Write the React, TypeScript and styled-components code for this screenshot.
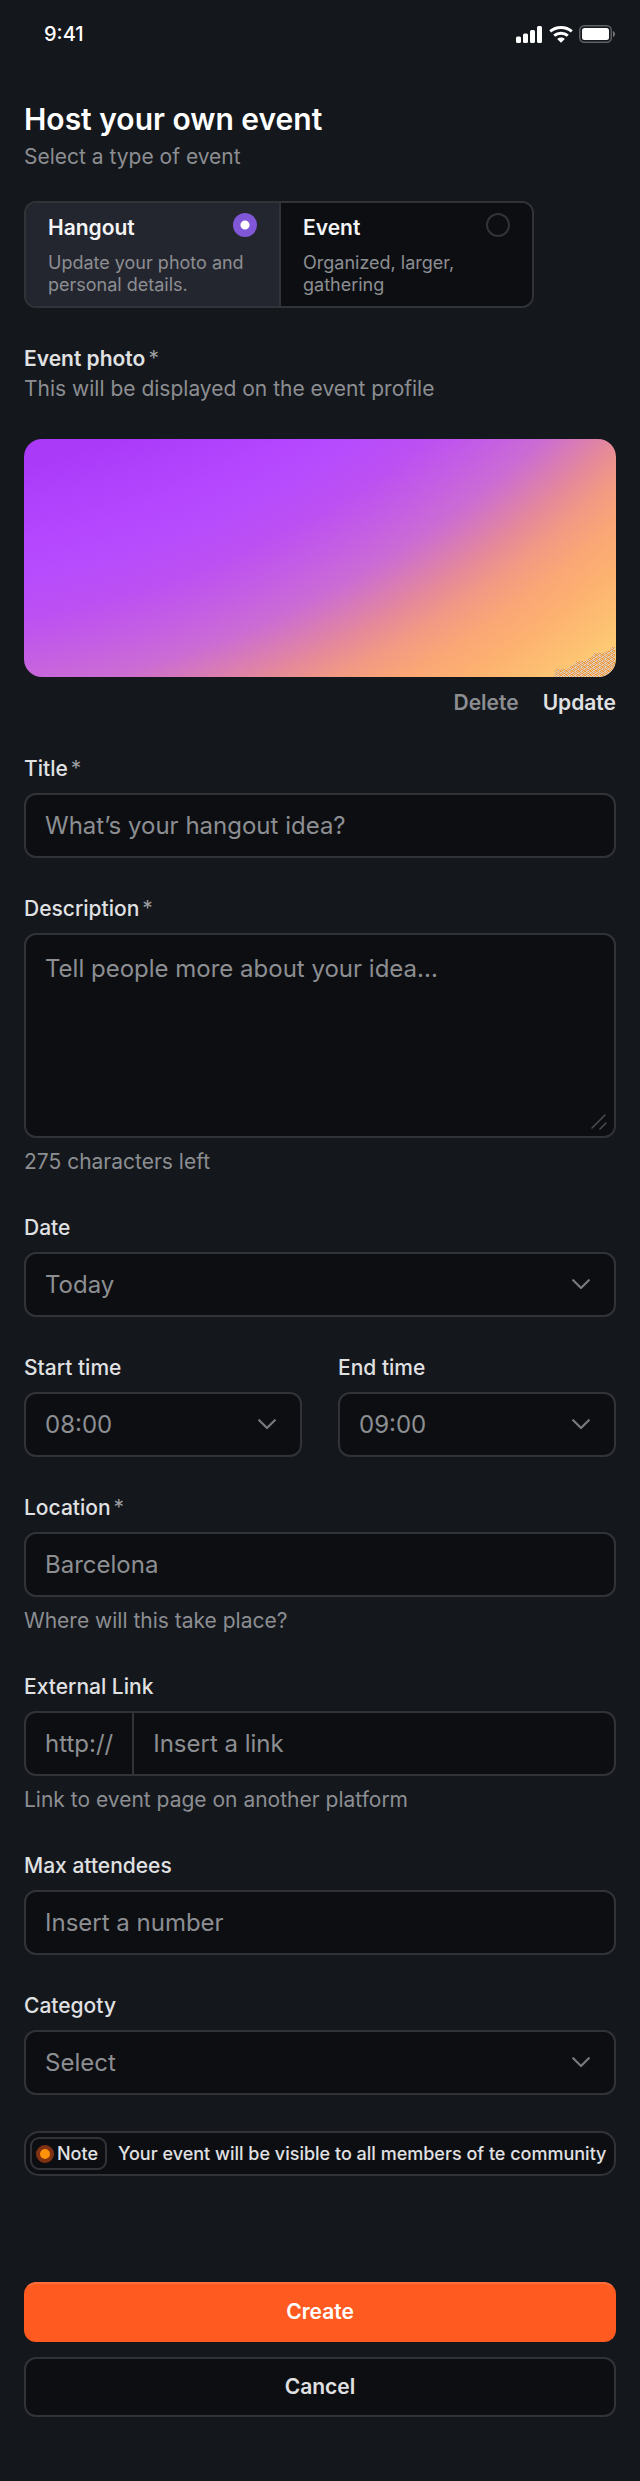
import React, { useState } from "react";
import styled, { createGlobalStyle, css } from "styled-components";

const Global = createGlobalStyle`
  *, *::before, *::after { box-sizing: border-box; }
  body { margin: 0; background: #14171c; }
  button, input, select, textarea { font: inherit; margin: 0; }
`;

const color = {
  surface: "#0d0e12",
  raised: "#24262f",
  line: "#313339",
  text: "#e0e1e3",
  muted: "#8c8e92",
  accent: "#ff5a1f",
  violet: "#8157d9",
};

const Page = styled.div`
  min-height: 100vh;
  background: #14171c;
  color: ${color.text};
  font-family: Inter, "Liberation Sans", sans-serif;
  font-size: 21px;
  line-height: 30px;
`;

const StatusBar = styled.header`
  display: flex;
  justify-content: space-between;
  align-items: center;
  height: 68px;
  padding: 0 24px 0 44px;
  color: #fff;
`;

const Clock = styled.time`
  font-size: 20px;
  font-weight: 500;
`;

const StatusIcons = styled.div`
  display: flex;
  align-items: center;
  gap: 6px;
`;

const Form = styled.form`
  display: flex;
  flex-direction: column;
  gap: 36px;
  padding: 29px 24px 65px;
`;

const Heading = styled.h1`
  margin: 0;
  color: #fff;
  font-size: 30px;
  line-height: 45px;
  font-weight: 600;
`;

const Muted = styled.p`
  margin: 0;
  color: ${color.muted};
`;

const Intro = styled.div`
  display: flex;
  flex-direction: column;
`;

const TypePicker = styled.div`
  display: grid;
  grid-template-columns: 1fr 1fr;
  width: 100%;
  max-width: 510px;
  margin-top: 29px;
  border: 2px solid ${color.line};
  border-radius: 12px;
  overflow: hidden;
`;

const TypeOption = styled.label<{ $selected: boolean }>`
  display: grid;
  grid-template-columns: 1fr 24px;
  row-gap: 9px;
  padding: 10px 22px;
  background: ${(p) => (p.$selected ? color.raised : color.surface)};
  cursor: pointer;

  & + & {
    border-left: 2px solid ${color.line};
  }
`;

const TypeName = styled.span`
  font-weight: 600;
  color: #f4f4f5;
`;

const TypeText = styled.span`
  grid-column: 1 / -1;
  font-size: 18px;
  line-height: 22px;
  color: ${color.muted};
`;

const Radio = styled.input`
  appearance: none;
  width: 24px;
  height: 24px;
  border: 2px solid ${color.line};
  border-radius: 50%;

  &:checked {
    border: 0;
    background: radial-gradient(circle, #fff 4px, ${color.violet} 5px);
  }
`;

const PhotoSection = styled.section`
  display: flex;
  flex-direction: column;
`;

const SectionName = styled.h2`
  margin: 0;
  font-size: 21px;
  line-height: 30px;
  font-weight: 600;
`;

const Star = styled.span`
  margin-left: 3px;
  color: #9c9ea1;
  font-weight: 400;
`;

const Photo = styled.div`
  position: relative;
  height: 238px;
  margin: 35px 0 11px;
  border-radius: 18px;
  overflow: hidden;
  background: radial-gradient(
    circle at -155px -719px,
    #aa3af8 760px,
    #b446ff 831px,
    #b64cfd 870px,
    #bd50f2 911px,
    #c45ee4 950px,
    #cb6cd4 985px,
    #d97cb4 1013px,
    #e68a98 1038px,
    #f29a84 1064px,
    #faa676 1095px,
    #fdb270 1130px,
    #fdc072 1165px,
    #fdd074 1200px
  );
`;

const PhotoGrain = styled.svg`
  position: absolute;
  right: 0;
  bottom: 0;
`;

const PhotoActions = styled.div`
  display: flex;
  justify-content: flex-end;
  gap: 24px;
`;

const TextButton = styled.button<{ $quiet?: boolean }>`
  padding: 0;
  border: 0;
  background: none;
  font-weight: 600;
  color: ${(p) => (p.$quiet ? color.muted : color.text)};
  cursor: pointer;
`;

const FieldBox = styled.div`
  display: flex;
  flex-direction: column;
  gap: 9px;
  min-width: 0;
`;

const FieldLabel = styled.label`
  font-weight: 500;
`;

const box = css`
  width: 100%;
  border: 2px solid ${color.line};
  border-radius: 12px;
  background: ${color.surface};
  color: ${color.muted};
  font-size: 24px;
  line-height: 36px;
`;

const TextInput = styled.input`
  ${box}
  height: 65px;
  padding: 0 19px;

  &::placeholder {
    color: ${color.muted};
    opacity: 1;
  }
`;

const TextArea = styled.textarea`
  ${box}
  display: block;
  height: 205px;
  padding: 16px 19px;
  resize: none;

  &::placeholder {
    color: ${color.muted};
    opacity: 1;
  }
`;

const ControlWrap = styled.div`
  position: relative;
`;

const Grip = styled.svg`
  position: absolute;
  right: 9px;
  bottom: 8px;
  pointer-events: none;
`;

const SelectInput = styled.select`
  ${box}
  display: block;
  appearance: none;
  height: 65px;
  padding: 0 60px 0 19px;
`;

const Caret = styled.svg`
  position: absolute;
  right: 26px;
  top: 27px;
  pointer-events: none;
`;

const Pair = styled.div`
  display: grid;
  grid-template-columns: 1fr 1fr;
  gap: 36px;
`;

const LinkGroup = styled.div`
  ${box}
  display: flex;
  height: 65px;
  overflow: hidden;
`;

const LinkPrefix = styled.span`
  display: flex;
  align-items: center;
  padding: 0 19px;
  border-right: 2px solid ${color.line};
`;

const LinkInput = styled.input`
  flex: 1;
  min-width: 0;
  padding: 0 19px;
  border: 0;
  background: none;
  color: ${color.muted};

  &::placeholder {
    color: ${color.muted};
    opacity: 1;
  }
`;

const Notice = styled.div`
  display: flex;
  align-items: center;
  gap: 11px;
  min-height: 44px;
  padding: 4px;
  border: 2px solid ${color.line};
  border-radius: 15px;
  background: ${color.surface};
  font-size: 18px;
  line-height: 24px;
  font-weight: 500;
`;

const NoticeTag = styled.span`
  display: flex;
  align-items: center;
  gap: 3px;
  height: 33px;
  padding: 0 7px 0 4px;
  border: 2px solid ${color.line};
  border-radius: 9px;
`;

const NoticeDot = styled.span`
  width: 18px;
  height: 18px;
  border: 4px solid #813212;
  border-radius: 50%;
  background: #ff9208;
`;

const Actions = styled.div`
  display: flex;
  flex-direction: column;
  gap: 15px;
  margin-top: 70px;
`;

const Button = styled.button<{ $primary?: boolean }>`
  height: 60px;
  border: 2px solid ${(p) => (p.$primary ? color.accent : color.line)};
  border-top-color: ${(p) => (p.$primary ? "#ff6e3c" : color.line)};
  border-radius: 12px;
  background: ${(p) => (p.$primary ? color.accent : color.surface)};
  color: ${(p) => (p.$primary ? "#fff" : color.text)};
  font-weight: 600;
  cursor: pointer;
`;

function Field(props: {
  id: string;
  label: string;
  required?: boolean;
  hint?: string;
  children: React.ReactNode;
}) {
  return (
    <FieldBox>
      <FieldLabel htmlFor={props.id}>
        {props.label}
        {props.required && <Star>*</Star>}
      </FieldLabel>
      {props.children}
      {props.hint && <Muted>{props.hint}</Muted>}
    </FieldBox>
  );
}

function Dropdown({ id, options }: { id: string; options: string[] }) {
  return (
    <ControlWrap>
      <SelectInput id={id} defaultValue={options[0]}>
        {options.map((o) => (
          <option key={o}>{o}</option>
        ))}
      </SelectInput>
      <Caret width="18" height="11" viewBox="0 0 18 11" fill="none">
        <path d="M1.2 1.2 9 9l7.8-7.8" stroke="#77797e" strokeWidth="2.2" strokeLinecap="round" strokeLinejoin="round" />
      </Caret>
    </ControlWrap>
  );
}

const eventTypes = [
  { id: "hangout", name: "Hangout", text: "Update your photo and personal details." },
  { id: "event", name: "Event", text: "Organized, larger, gathering" },
];

export default function App() {
  const [type, setType] = useState("hangout");
  return (
    <Page>
      <Global />
      <StatusBar>
        <Clock>9:41</Clock>
        <StatusIcons>
          <svg width="27" height="17" viewBox="0 0 27 17" fill="#fff">
            <rect x="0" y="10.5" width="5" height="6.5" rx="1.5" />
            <rect x="7" y="7.5" width="5" height="9.5" rx="1.5" />
            <rect x="14" y="4" width="5" height="13" rx="1.5" />
            <rect x="21" y="0" width="5" height="17" rx="1.5" />
          </svg>
          <svg width="24" height="17" viewBox="0 0 24 17" fill="none" stroke="#fff" strokeWidth="3">
            <path d="M1.2 5.4C7.2 0.2 16.8 0.2 22.8 5.4" />
            <path d="M5.2 9.7C9 6.4 15 6.4 18.8 9.7" />
            <path d="M8.2 12.9C10.4 11.1 13.6 11.1 15.8 12.9L12 16.8Z" fill="#fff" stroke="none" />
          </svg>
          <svg width="37" height="18" viewBox="0 0 37 18" fill="none">
            <rect x="0.75" y="0.75" width="31.5" height="16.5" rx="4.5" stroke="#5e6064" strokeWidth="1.5" />
            <rect x="3" y="3" width="27" height="12" rx="2.5" fill="#fff" />
            <path d="M34 6c2.6 1 2.6 5 0 6z" fill="#75777b" />
          </svg>
        </StatusIcons>
      </StatusBar>

      <Form onSubmit={(e) => e.preventDefault()}>
        <Intro>
          <Heading>Host your own event</Heading>
          <Muted>Select a type of event</Muted>
          <TypePicker role="radiogroup" aria-label="Select a type of event">
            {eventTypes.map((t) => (
              <TypeOption key={t.id} $selected={type === t.id}>
                <TypeName>{t.name}</TypeName>
                <Radio type="radio" name="type" value={t.id} checked={type === t.id} onChange={() => setType(t.id)} />
                <TypeText>{t.text}</TypeText>
              </TypeOption>
            ))}
          </TypePicker>
        </Intro>

        <PhotoSection>
          <SectionName>
            Event photo<Star>*</Star>
          </SectionName>
          <Muted>This will be displayed on the event profile</Muted>
          <Photo role="img" aria-label="Event photo">
            <PhotoGrain width="64" height="30" viewBox="0 0 64 30">
              <defs>
                <pattern id="grain" width="6" height="4" patternUnits="userSpaceOnUse">
                  <rect width="6" height="4" fill="#dccbbd" />
                  <path d="M0 0h1v1H0zM2 0h2v1H2zM1 1h1v1H1zM4 1h1v1H4zM0 2h1v1H0zM3 2h1v1H3zM5 2h1v1H5zM1 3h2v1H1zM4 3h1v1H4z" fill="#f49a34" />
                </pattern>
              </defs>
              <path
                d="M0 30l4-1-2-2 2-5h12l3-4h3l2-4h10l2-3h3l3-5h9l4-2h3l1-4h4v30z"
                fill="url(#grain)"
              />
            </PhotoGrain>
          </Photo>
          <PhotoActions>
            <TextButton type="button" $quiet>Delete</TextButton>
            <TextButton type="button">Update</TextButton>
          </PhotoActions>
        </PhotoSection>

        <Field id="title" label="Title" required>
          <TextInput id="title" placeholder="What’s your hangout idea?" />
        </Field>

        <Field id="description" label="Description" required hint="275 characters left">
          <ControlWrap>
            <TextArea id="description" placeholder="Tell people more about your idea..." />
            <Grip width="16" height="16" viewBox="0 0 16 16" stroke="#4b4d53" strokeWidth="1.5" strokeLinecap="round">
              <path d="M1 14 14 1M9 15l6-6" />
            </Grip>
          </ControlWrap>
        </Field>

        <Field id="date" label="Date">
          <Dropdown id="date" options={["Today", "Tomorrow"]} />
        </Field>

        <Pair>
          <Field id="start" label="Start time">
            <Dropdown id="start" options={["08:00", "09:00"]} />
          </Field>
          <Field id="end" label="End time">
            <Dropdown id="end" options={["09:00", "10:00"]} />
          </Field>
        </Pair>

        <Field id="location" label="Location" required hint="Where will this take place?">
          <TextInput id="location" placeholder="Barcelona" />
        </Field>

        <Field id="link" label="External Link" hint="Link to event page on another platform">
          <LinkGroup>
            <LinkPrefix>http://</LinkPrefix>
            <LinkInput id="link" placeholder="Insert a link" />
          </LinkGroup>
        </Field>

        <Field id="max" label="Max attendees">
          <TextInput id="max" inputMode="numeric" placeholder="Insert a number" />
        </Field>

        <Field id="category" label="Categoty">
          <Dropdown id="category" options={["Select"]} />
        </Field>

        <Notice>
          <NoticeTag>
            <NoticeDot />
            Note
          </NoticeTag>
          <span>Your event will be visible to all members of te community</span>
        </Notice>

        <Actions>
          <Button type="submit" $primary>Create</Button>
          <Button type="button">Cancel</Button>
        </Actions>
      </Form>
    </Page>
  );
}
